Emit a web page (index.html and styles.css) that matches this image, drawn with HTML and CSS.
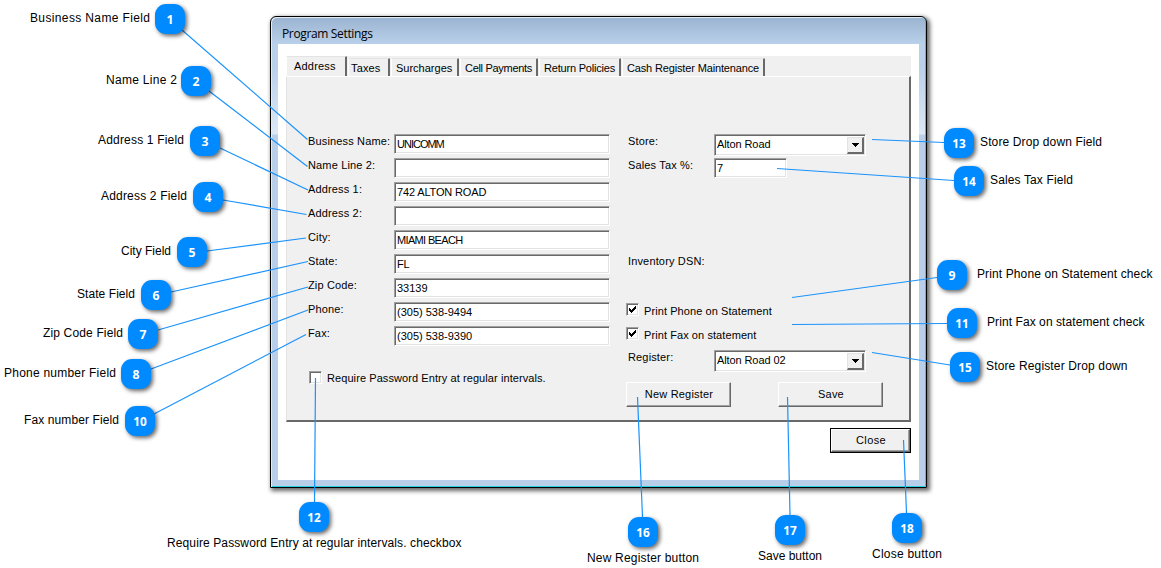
FILE: index.html
```html
<!DOCTYPE html>
<html lang="en">
<head>
  <meta charset="UTF-8">
  <title>Program Settings</title>
  <link rel="stylesheet" href="styles.css">
</head>
<body>

  <div class="window">
    <div class="title-bar">Program Settings</div>
    <div class="window-body">

      <!-- Tabs -->
      <div class="tabs">
        <div class="tab active">Address</div>
        <div class="tab taxes">Taxes</div>
        <div class="tab surcharges">Surcharges</div>
        <div class="tab payments">Cell Payments</div>
        <div class="tab policies">Return Policies</div>
        <div class="tab maintenance">Cash Register Maintenance</div>
      </div>

      <div class="panel">
        <div class="columns">
          <!-- Address fields -->
          <div class="fields">
            <label for="business">Business Name:</label>
            <input type="text" id="business" class="tight" value="UNICOMM">
            <label for="name2">Name Line 2:</label>
            <input type="text" id="name2">
            <label for="address1">Address 1:</label>
            <input type="text" id="address1" value="742 ALTON ROAD">
            <label for="address2">Address 2:</label>
            <input type="text" id="address2">
            <label for="city">City:</label>
            <input type="text" id="city" class="narrow" value="MIAMI BEACH">
            <label for="state">State:</label>
            <input type="text" id="state" value="FL">
            <label for="zip">Zip Code:</label>
            <input type="text" id="zip" class="digits" value="33139">
            <label for="phone">Phone:</label>
            <input type="text" id="phone" class="digits" value="(305) 538-9494">
            <label for="fax">Fax:</label>
            <input type="text" id="fax" class="digits" value="(305) 538-9390">
          </div>

          <!-- Store fields -->
          <div class="store">
            <span class="label">Store:</span>
            <div class="dropdown">
              <span>Alton Road</span>
              <div class="arrow"><svg width="7" height="4" shape-rendering="crispEdges"><path d="M0 0h7v1h-1v1h-1v1h-1v1h-1v-1h-1v-1h-1v-1h-1z"/></svg></div>
            </div>
            <label for="tax">Sales Tax %:</label>
            <input type="text" id="tax" class="short" value="7">
            <span class="label dsn">Inventory DSN:</span>
            <div class="check-row print-phone">
              <div class="checkbox"><svg width="7" height="7" shape-rendering="crispEdges"><path d="M0 2h1v1h1v1h1v-1h1v-1h1v-1h1v-1h1v3h-1v1h-1v1h-1v1h-1v1h-1v-1h-1v-1h-1z"/></svg></div>
              <span>Print Phone on Statement</span>
            </div>
            <div class="check-row print-fax">
              <div class="checkbox"><svg width="7" height="7" shape-rendering="crispEdges"><path d="M0 2h1v1h1v1h1v-1h1v-1h1v-1h1v-1h1v3h-1v1h-1v1h-1v1h-1v1h-1v-1h-1v-1h-1z"/></svg></div>
              <span>Print Fax on statement</span>
            </div>
            <span class="label register">Register:</span>
            <div class="dropdown register">
              <span>Alton Road 02</span>
              <div class="arrow"><svg width="7" height="4" shape-rendering="crispEdges"><path d="M0 0h7v1h-1v1h-1v1h-1v1h-1v-1h-1v-1h-1v-1h-1z"/></svg></div>
            </div>
          </div>
        </div>

        <div class="bottom-row">
          <div class="check-row password">
            <div class="checkbox"></div>
            <span>Require Password Entry at regular intervals.</span>
          </div>
          <div class="actions">
            <button>New Register</button>
            <button>Save</button>
          </div>
        </div>
      </div>

      <div class="footer">
        <div class="default-btn"><button>Close</button></div>
      </div>
    </div>
  </div>

  <!-- Callouts -->
  <svg class="callouts" id="callouts" width="1161" height="568"></svg>

  <script>
    // left/top of the badge, line start and end, caption position and width
    const callouts = [
      { n: 1, at: [155, 4], line: [182, 30, 307.5, 139.5], text: "Business Name Field", pos: [30, 22, 120] },
      { n: 2, at: [181, 66], line: [209, 91, 307.5, 166.5], text: "Name Line 2", pos: [106, 84, 71] },
      { n: 3, at: [190, 126], line: [220, 148, 308, 190], text: "Address 1 Field", pos: [98, 144, 86] },
      { n: 4, at: [193, 182], line: [223, 200, 306.5, 214.5], text: "Address 2 Field", pos: [101, 200, 86] },
      { n: 5, at: [177, 237], line: [207, 251, 306, 238], text: "City Field", pos: [121, 255, 50] },
      { n: 6, at: [141, 280], line: [171, 292, 308, 261.5], text: "State Field", pos: [77, 298, 58] },
      { n: 7, at: [128, 319], line: [158, 330, 308, 287], text: "Zip Code Field", pos: [43, 337, 80] },
      { n: 8, at: [121, 359], line: [151, 369, 308, 310], text: "Phone number Field", pos: [4, 377, 112] },
      { n: 9, at: [937, 260], line: [937, 277.5, 792, 297.5], text: "Print Phone on Statement check", pos: [977, 278, 175.5] },
      { n: 10, at: [125, 406], line: [154, 414, 306, 334.5], text: "Fax number Field", pos: [24, 424, 95] },
      { n: 11, at: [947, 308], line: [947, 323.5, 792, 324.5], text: "Print Fax on statement check", pos: [987, 326, 157.5] },
      { n: 12, at: [299, 502], line: [314.5, 502, 315.5, 378], text: "Require Password Entry at regular intervals. checkbox", pos: [167, 547, 294.5] },
      { n: 13, at: [944, 128], line: [944, 142.5, 872, 139.5], text: "Store Drop down Field", pos: [980, 146, 122] },
      { n: 14, at: [954, 166], line: [954, 180.5, 777, 168.5], text: "Sales Tax Field", pos: [990, 184, 83] },
      { n: 15, at: [950, 352], line: [950, 365, 872, 352.5], text: "Store Register Drop down", pos: [986, 370, 141.5] },
      { n: 16, at: [628, 517], line: [642.5, 517, 637.5, 397], text: "New Register button", pos: [587, 562, 112] },
      { n: 17, at: [775, 515], line: [790, 515, 787.5, 397], text: "Save button", pos: [758, 560, 64] },
      { n: 18, at: [892, 513], line: [906.5, 513, 903.5, 440], text: "Close button", pos: [872, 558, 70] }
    ];

    let content = "";
    callouts.forEach(c => {
      const [x, y] = c.at;
      const [x1, y1, x2, y2] = c.line;
      const [tx, ty, width] = c.pos;
      const digits = c.n < 10 ? 7 : 13.5;
      content += `
        <line x1="${x1}" y1="${y1}" x2="${x2}" y2="${y2}"/>
        <rect x="${x}" y="${y}" width="30" height="30" rx="11"/>
        <text class="number" x="${x + 15 - digits / 2}" y="${y + 20}" textLength="${digits}" lengthAdjust="spacingAndGlyphs">${c.n}</text>
        <text class="caption" x="${tx}" y="${ty}" textLength="${width}">${c.text}</text>
      `;
    });
    document.getElementById("callouts").innerHTML = content;
  </script>

</body>
</html>
```
FILE: styles.css
```css
* {
  box-sizing: border-box;
}

body {
  margin: 0;
  height: 568px;
  overflow: hidden;
  background-color: #ffffff;
  font-family: "Liberation Sans", Arial, sans-serif;
  font-size: 11px;
  line-height: 14px;
  letter-spacing: 0.15px;
  color: #000000;
  display: flow-root;
}

.window {
  width: 657px;
  height: 472px;
  margin: 16px 0 0 270px;
  padding: 1px 7px 7px;
  border: 1px solid #000000;
  border-radius: 6px 6px 0 0;
  background: linear-gradient(#9ab3d0 0, #b9d0ea 27px, #b9d0ea 50px, #dce8f5 117px, #b9cfe9 118px);
  box-shadow: inset 1px 1px 0 #e4edf6, inset -1px -1px 0 #27cfe5, 2px 2px 4px 1px rgba(0,0,0,0.6);
}

.title-bar {
  height: 26px;
  padding: 9px 0 0 4px;
  font-family: "Open Sans", "Noto Sans", sans-serif;
  font-size: 12px;
  line-height: 14px;
  letter-spacing: -0.35px;
}

.window-body {
  height: 436px;
  padding: 12px 8px 0;
  background-color: #ffffff;
}

.tabs {
  display: flex;
  align-items: flex-end;
  height: 20px;
  background-color: #f0f0f0;
  letter-spacing: -0.1px;
}

.tab {
  height: 18px;
  margin-right: 1px;
  padding: 2px 0 0 5px;
  border-right: 2px solid #696969;
  border-left: 1px solid #ffffff;
  border-top: 1px solid #e3e3e3;
  border-radius: 2px 1px 0 0;
  white-space: nowrap;
}

.tab.active {
  width: 61px;
  height: 20px;
  padding: 2px 0 0 7px;
  letter-spacing: 0.2px;
}

.taxes { width: 42px; padding-left: 2px; letter-spacing: 0.15px; }
.surcharges { width: 68px; padding-left: 4px; letter-spacing: 0; }
.payments { width: 78px; padding-left: 4px; letter-spacing: -0.3px; }
.policies { width: 82px; padding-left: 4px; letter-spacing: -0.2px; }
.maintenance { width: 143px; padding-left: 4px; letter-spacing: -0.15px; }

.panel {
  height: 346px;
  padding: 57px 26px 0 21px;
  background-color: #f0f0f0;
  border: 1px solid #ffffff;
  border-left-color: #e3e3e3;
  border-right: 2px solid #696969;
  border-bottom: 2px solid #696969;
}

.columns {
  display: flex;
  height: 241px;
}

.fields {
  display: grid;
  grid-template-columns: 86px 216px;
  grid-template-rows: repeat(9, 24px);
  margin-right: 18px;
}

.store {
  display: grid;
  grid-template-columns: 86px 152px;
  grid-template-rows: repeat(10, 24px);
}

.dsn {
  grid-row: 6;
}

.print-phone {
  grid-row: 8;
}

.print-fax {
  grid-row: 9;
}

.register {
  grid-row: 10;
}

.store .check-row {
  grid-column: 1 / 3;
  margin: 1px 0 0 -2px;
}

input {
  width: 216px;
  height: 20px;
  padding: 0 2px;
  border: 1px solid #ffffff;
  border-top-color: #a0a0a0;
  border-left-color: #a0a0a0;
  box-shadow: inset 1px 1px 0 #696969, inset -1px -1px 0 #e3e3e3;
  background-color: #ffffff;
  font: 11px "Liberation Sans", Arial, sans-serif;
  letter-spacing: -0.15px;
  color: #000000;
  outline: none;
}

input.tight {
  letter-spacing: -1px;
}

input.narrow {
  letter-spacing: -0.65px;
}

input.digits {
  letter-spacing: 0;
}

input.short {
  width: 73px;
}

.dropdown {
  display: flex;
  justify-content: space-between;
  width: 152px;
  height: 22px;
  padding: 2px 1px 2px 2px;
  border: 1px solid #ffffff;
  border-top-color: #a0a0a0;
  border-left-color: #a0a0a0;
  box-shadow: inset 1px 1px 0 #696969, inset -1px -1px 0 #e3e3e3;
  background-color: #ffffff;
}

.dropdown span {
  letter-spacing: -0.1px;
}

.arrow {
  display: flex;
  align-items: center;
  justify-content: center;
  width: 17px;
  height: 17px;
  background-color: #f0f0f0;
  border: 1px solid #e3e3e3;
  border-right: 2px solid #696969;
  border-bottom: 2px solid #696969;
}

.check-row {
  display: flex;
  letter-spacing: 0.08px;
}

.check-row span {
  padding: 1px 0 0 5px;
}

.checkbox {
  width: 13px;
  height: 13px;
  padding: 2px;
  border: 1px solid #ffffff;
  border-top-color: #a0a0a0;
  border-left-color: #a0a0a0;
  box-shadow: inset 1px 1px 0 #696969, inset -1px -1px 0 #e3e3e3;
  background-color: #ffffff;
}

.checkbox svg {
  display: block;
}

.bottom-row {
  display: flex;
  justify-content: space-between;
}

.password {
  margin: -4px 0 0 1px;
}

.password span {
  padding-top: 0;
}

.actions {
  display: flex;
  gap: 47px;
  margin-top: 7px;
}

button {
  width: 105px;
  height: 25px;
  padding: 0 0 1px 1px;
  background-color: #f0f0f0;
  border: 1px solid #ffffff;
  border-right-color: #696969;
  border-bottom-color: #696969;
  box-shadow: inset -1px -1px 0 #a0a0a0;
  font: 11px "Liberation Sans", Arial, sans-serif;
  letter-spacing: 0.2px;
  color: #000000;
}

.footer {
  display: flex;
  justify-content: flex-end;
  padding-top: 6px;
}

.default-btn {
  height: 25px;
  border: 1px solid #000000;
}

.default-btn button {
  display: block;
  width: 79px;
  height: 23px;
  letter-spacing: 0.4px;
}

/* Callouts lie over the window */
.callouts {
  position: absolute;
  top: 0;
  left: 0;
  letter-spacing: 0;
  pointer-events: none;
}

.callouts line {
  stroke: #1b93fb;
  stroke-width: 1.2;
}

.callouts rect {
  fill: #008aff;
  filter: drop-shadow(2px 2px 2px rgba(0,0,0,0.6));
}

.number {
  fill: #ffffff;
  font: bold 13px "Open Sans", "Noto Sans", sans-serif;
}

.caption {
  font-size: 12px;
}
```
